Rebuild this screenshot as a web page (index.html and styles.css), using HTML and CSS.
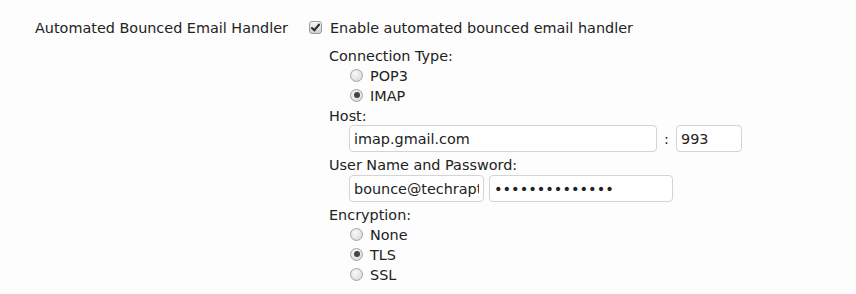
FILE: index.html
```html
<!DOCTYPE html>
<html lang="en">
<head>
    <meta charset="UTF-8">
    <title>Bounced Email Handler</title>
    <link rel="stylesheet" href="styles.css">
</head>
<body>
    <div class="setting">
        <div class="setting-label">Automated Bounced Email Handler</div>
        <div class="setting-body">
            <label class="check-row">
                <input type="checkbox" class="check" checked>
                <span>Enable automated bounced email handler</span>
            </label>

            <div class="options">
                <div class="field-label">Connection Type:</div>
                <label class="radio-row"><input type="radio" name="conn" class="radio"><span>POP3</span></label>
                <label class="radio-row"><input type="radio" name="conn" class="radio" checked><span>IMAP</span></label>

                <div class="field-label host-label">Host:</div>
                <div class="input-row">
                    <input type="text" class="text-input host" value="imap.gmail.com">
                    <span class="colon">:</span>
                    <input type="text" class="text-input port" value="993">
                </div>

                <div class="field-label">User Name and Password:</div>
                <div class="input-row">
                    <input type="text" class="text-input user" value="bounce@techraptor.net">
                    <input type="password" class="text-input pass" value="aaaaaaaaaaaaaa">
                </div>

                <div class="field-label">Encryption:</div>
                <label class="radio-row"><input type="radio" name="enc" class="radio"><span>None</span></label>
                <label class="radio-row"><input type="radio" name="enc" class="radio" checked><span>TLS</span></label>
                <label class="radio-row"><input type="radio" name="enc" class="radio"><span>SSL</span></label>
            </div>
        </div>
    </div>
</body>
</html>
```

FILE: styles.css
```css
body {
    margin: 0;
    padding: 18px 0 0 35px;
    background: #fdfdfd;
    color: #222;
    font-family: "DejaVu Sans", sans-serif;
    font-size: 14.4px;
    line-height: 20px;
}

.setting {
    display: grid;
    grid-template-columns: 274px 1fr;
}

.setting-body {
    display: flex;
    flex-direction: column;
}

.check-row {
    display: flex;
    align-items: center;
    gap: 8px;
}

.check {
    appearance: none;
    margin: 0 0 2px;
    width: 13px;
    height: 13px;
    border: 1px solid #9c9c9c;
    border-radius: 3px;
    background: linear-gradient(#f6f6f6, #cfcfcf);
    position: relative;
}

.check:checked::after {
    content: "";
    position: absolute;
    left: 3px;
    top: 0;
    width: 3px;
    height: 7px;
    border: solid #2a2a2a;
    border-width: 0 2.5px 2.5px 0;
    transform: rotate(40deg);
}

.options {
    display: flex;
    flex-direction: column;
    padding-left: 20px;
    margin-top: 8px;
}

.radio-row {
    display: flex;
    align-items: center;
    gap: 7px;
    padding-left: 21px;
    height: 20px;
}

.radio {
    appearance: none;
    margin: 0 0 2px;
    width: 13px;
    height: 13px;
    border: 1px solid #a4a4a4;
    border-radius: 50%;
    background: radial-gradient(circle at 40% 35%, #fafafa, #d2d2d2);
    position: relative;
}

.radio:checked::after {
    content: "";
    position: absolute;
    left: 2.5px;
    top: 2.5px;
    width: 6px;
    height: 6px;
    border-radius: 50%;
    background: #444;
}

.host-label {
    height: 19px;
}

.input-row {
    display: flex;
    align-items: center;
    gap: 5px;
    padding-left: 20px;
    margin-bottom: 3px;
}

.text-input {
    box-sizing: border-box;
    height: 27px;
    margin: 0;
    padding: 0 4px;
    border: 1px solid #d4d4d4;
    border-radius: 4px;
    background: #fff;
    color: #222;
    font-family: "DejaVu Sans", sans-serif;
    font-size: 14.4px;
}

.host {
    width: 308px;
}

.colon {
    width: 9px;
    text-align: center;
}

.port {
    width: 66px;
}

.user {
    width: 135px;
}

.pass {
    width: 184px;
    font-size: 14.5px;
}
```
